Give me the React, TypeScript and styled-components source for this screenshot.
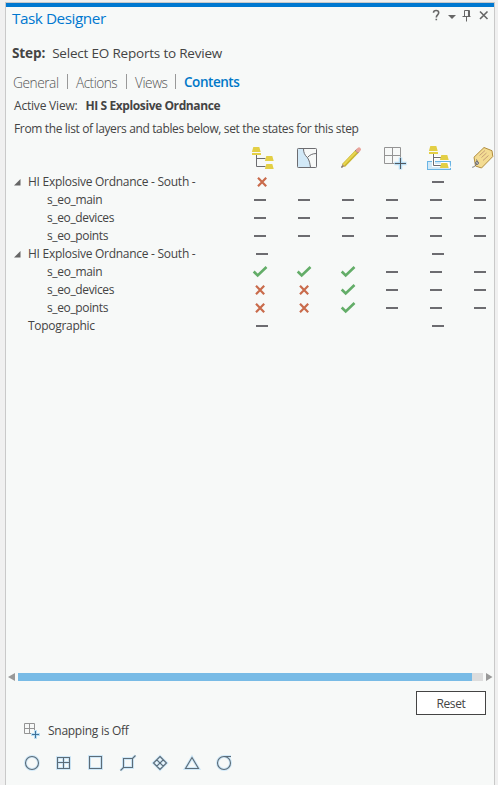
import React from "react";
import styled, { createGlobalStyle } from "styled-components";

const Global = createGlobalStyle`
  * { box-sizing: border-box; }
  html, body { margin: 0; background: #f0f0f0; }
  body { font-family: "Open Sans", "Noto Sans", sans-serif; color: #444; font-size: 12px; overflow: hidden; }
`;

const Panel = styled.div`
  width: 490px;
  height: 783px;
  margin: 2px 0 0 5px;
  border: 1px solid #c9c9c9;
  border-bottom: 0;
  background: #f7f9f8;
  display: flex;
  flex-direction: column;
  overflow: hidden;
`;
const Accent = styled.div`
  height: 4px;
  flex: none;
  background: #0078d0;
`;
const TitleBar = styled.header`
  display: flex;
  justify-content: space-between;
  height: 35px;
  flex: none;
  padding-left: 6px;
`;
const Label = styled.span<{ $size?: number; $track?: number; $weight?: number }>`
  font-size: ${(p) => p.$size ?? 12}px;
  letter-spacing: ${(p) => p.$track ?? 0}px;
  font-weight: ${(p) => p.$weight ?? 400};
  white-space: pre;
`;
const Title = styled(Label)`
  color: #0078d0;
  line-height: 22px;
`;
const StepLine = styled.div`
  display: flex;
  gap: 7px;
  height: 24px;
  flex: none;
  padding-left: 6px;
  line-height: 22px;
`;
const Tabs = styled.nav`
  display: flex;
  height: 31px;
  flex: none;
  padding: 5px 0 0 7px;
`;
const Tab = styled.div<{ $width: number; $active?: boolean }>`
  width: ${(p) => p.$width}px;
  line-height: 23px;
  color: ${(p) => (p.$active ? "#0078c8" : "#555")};
`;
const Divider = styled.i`
  width: 1px;
  height: 15px;
  margin: 3px 8px 0 0;
  background: #999;
`;
const Line = styled.div<{ $height: number }>`
  display: flex;
  gap: 8px;
  flex: none;
  height: ${(p) => p.$height}px;
  line-height: 18px;
  padding-left: 8px;
`;
const Tree = styled.main`
  flex: 1;
  overflow: hidden;
`;
const Row = styled.div<{ $head?: boolean }>`
  display: grid;
  grid-template-columns: 232px repeat(6, 44px);
  height: ${(p) => (p.$head ? 30 : 18)}px;
`;
const Name = styled.div<{ $level: number }>`
  display: flex;
  line-height: 18px;
  padding-left: ${(p) => (p.$level ? 41 : 8)}px;
`;
const Twisty = styled.span`
  width: 14px;
  svg { display: block; margin-top: 6px; }
`;
const Cell = styled.div<{ $group: boolean }>`
  display: flex;
  justify-content: center;
  padding-left: ${(p) => (p.$group ? 4 : 0)}px;
  svg { display: block; flex: none; }
`;
const ScrollBar = styled.div`
  display: flex;
  align-items: center;
  flex: none;
  height: 10px;
  padding-left: 2px;
  gap: 3px;
  svg { display: block; flex: none; }
`;
const Track = styled.div`
  width: 465px;
  height: 8px;
  background: #ddd;
`;
const Thumb = styled.div`
  width: 454px;
  height: 8px;
  background: #78bbe6;
`;
const Footer = styled.footer`
  flex: none;
  height: 103px;
  padding-top: 9px;
`;
const Reset = styled.button`
  display: block;
  width: 70px;
  height: 24px;
  margin-left: 410px;
  padding: 0;
  border: 1px solid #444;
  background: #fff;
  color: #444;
  font-family: inherit;
  line-height: 20px;
`;
const Snapping = styled.div`
  display: flex;
  gap: 6px;
  height: 32px;
  margin-top: 7px;
  padding-left: 18px;
  line-height: 18px;
  svg { display: block; }
`;
const SnapTools = styled.div`
  display: flex;
  gap: 14px;
  padding-left: 17px;
  svg { display: block; }
`;

const grey = "#6c6c70";
const yellow = "#e3cf45";

const Lamp = ({ x, y, bar }: { x: number; y: number; bar?: boolean }) => (
  <g fill={yellow}>
    <path d={`M${x + 1.3} ${y}h6l1.4 5h-8.8z`} />
    {bar && <path d={`M${x} ${y + 6}h9v2h-9z`} />}
  </g>
);

const headIcons = [
  <>
    <path d="M18.5 12v11.5h9M18.5 15.5h9" stroke={grey} fill="none" />
    <Lamp x={14} y={4} bar />
    <Lamp x={27} y={13} />
    <Lamp x={27} y={21} />
  </>,
  <>
    <rect x="15.5" y="5.5" width="19" height="19" rx=".5" fill="#f7f9f8" />
    <path d="M15.5 5.5h6c0 4 1 6.500 4 9.200 2 3 2.500 6 3 9.800h-13z" fill="#d2e9f7" />
    <path d="M21.500 5.500c0 4 1 6.500 4 9.200 2 3 2.500 6 3 9.800M25.500 14.500c2-2.500 5-4 9-4" fill="none" stroke={grey} />
    <rect x="15.500" y="5.500" width="19" height="19" rx=".8" fill="none" stroke={grey} />
  </>,
  <>
    <path d="M17.500 22.500 31 8.500" stroke="#c9b42e" strokeWidth="4" />
    <path d="M17.300 22 30.500 8.200" stroke="#e8d552" strokeWidth="2" />
    <path d="M15.300 24.500l1-3.400 2.500 2.400z" fill="#a98f72" />
    <path d="M15.200 24.700l.6-1.700 1.100 1.200z" fill="#444" />
    <path d="M30.500 9 32 7.400" stroke="#6c6c70" strokeWidth="4" />
    <path d="M31.900 7.500 33 6.400" stroke="#e9a49b" strokeWidth="4" strokeLinecap="round" />
  </>,
  <>
    <path d="M14.500 4.500h16v16h-16zM22.500 4.500v16M14.500 12.500h16" fill="none" stroke="#949494" />
    <path d="M30.500 14.500v12M24.500 20.500h12" stroke="#b9dff6" strokeWidth="3.500" />
    <path d="M30.500 15v11M25 20.500h11" stroke="#505860" />
  </>,
  <>
    <rect x="13.500" y="18.500" width="23" height="8" fill="#d2e9f7" stroke="#6ab5e4" />
    <path d="M19.500 11v11.500h8M19.500 14.500h8" stroke="#fff" strokeWidth="3" fill="none" />
    <path d="M27 19h8l2 6H26z" fill="#fff" />
    <path d="M19.500 11v11.500h8M19.500 14.500h8" stroke={grey} fill="none" />
    <Lamp x={15} y={3} bar />
    <Lamp x={26} y={12} />
    <Lamp x={26} y={20} />
  </>,
  <>
    <path d="M16 14.200 26 4.500l8 3.200.8 5.800L23.500 25l-6-2z" fill="#f3dc92" stroke="#b18d3e" strokeLinejoin="round" />
    <path d="M21.500 12.500l5.500-5M23.500 14.500l5-4.500M25 17.500l5.500-5" stroke="#c6a078" />
    <circle cx="19" cy="20" r="1.500" fill="#fff" stroke={grey} />
    <path d="M18.500 16.500c1.500 2 .5 4.500-1 6s-2.500 1.500-3.300 1.800" fill="none" stroke={grey} />
  </>,
];

const Mark = ({ kind }: { kind: string }) => (
  <svg width="16" height="18">
    {kind === "-" && <path d="M2 8h12v2H2z" fill={grey} />}
    {kind === "x" && <path d="M4 4.800l8.200 8.400M12.200 4.800 4 13.200" stroke="#c96b4b" strokeWidth="2.200" fill="none" />}
    {kind === "v" && <path d="M1.700 8.500 5.700 12.500 14.500 4" stroke="#63ad68" strokeWidth="2.600" fill="none" />}
  </svg>
);

const rows: [string, number, string][] = [
  ["HI Explosive Ordnance - South -", 0, "x   - "],
  ["s_eo_main", 1, "------"],
  ["s_eo_devices", 1, "------"],
  ["s_eo_points", 1, "------"],
  ["HI Explosive Ordnance - South -", 0, "-   - "],
  ["s_eo_main", 1, "vvv---"],
  ["s_eo_devices", 1, "xxv---"],
  ["s_eo_points", 1, "xxv---"],
  ["Topographic", 0, "-   - "],
];
const tracking: Record<string, number> = {
  "HI Explosive Ordnance - South -": -0.27,
  s_eo_main: -0.35,
  s_eo_devices: -0.37,
  s_eo_points: -0.37,
  Topographic: -0.3,
};

const tools = [
  <circle cx="9" cy="9" r="6.500" />,
  <path d="M2.500 3.500h12v11h-12zM8.500 3.500v11M2.500 8.500h12" />,
  <path d="M2.500 2.500h12v12h-12z" />,
  <path d="M4.500 4.500h9v9h-9zM1.500 16.500l3-3M13.500 4.500l3-3" />,
  <path d="M9 2.500 15.500 9 9 15.500 2.500 9zM5.800 5.800l6.400 6.400M12.200 5.800l-6.400 6.400" />,
  <path d="M9 3.500l6.500 11h-13z" />,
  <path d="M9 2.500h7M15.500 9a6.500 6.500 0 1 1-6.500-6.500A6.500 6.500 0 0 1 15.500 9z" />,
];

export default function App() {
  return (
    <>
      <Global />
      <Panel>
        <Accent />
        <TitleBar>
          <Title $size={15.3} $track={-0.45}>Task Designer</Title>
          <svg width="65" height="22" fill="none" stroke="#666">
            <path d="M4.500 5.800c0-3 5.200-3 5.200 0 0 2-2.400 2.100-2.400 4.700M7.300 11.700v1.600" strokeWidth="1.600" />
            <path d="M19 8h8l-4 4z" fill="#666" stroke="none" />
            <path d="M35.500 9.500v-6h5v6M33.500 9.500h8M37.500 9.500v5" />
            <path d="M39.700 4v5" strokeWidth="1.500" />
            <path d="M51 4.500l7.500 7.500M58.500 4.500 51 12" strokeWidth="1.600" />
          </svg>
        </TitleBar>
        <StepLine>
          <Label $size={13.6} $weight={700} $track={-0.15}>Step:</Label>
          <Label $size={13.5} $track={-0.2}>Select EO Reports to Review</Label>
        </StepLine>
        <Tabs>
          <Tab $width={54}><Label $size={13.7} $track={-0.45} $weight={300}>General</Label></Tab>
          <Divider />
          <Tab $width={50}><Label $size={13.7} $track={-0.55} $weight={300}>Actions</Label></Tab>
          <Divider />
          <Tab $width={40}><Label $size={13.7} $track={-0.45} $weight={300}>Views</Label></Tab>
          <Divider />
          <Tab $width={70} $active><Label $size={13.5} $track={-0.45} $weight={600}>Contents</Label></Tab>
        </Tabs>
        <Line $height={23}>
          <Label $track={-0.2}>Active View:</Label>
          <Label $weight={700} $track={-0.4}>HI S Explosive Ordnance</Label>
        </Line>
        <Line $height={23}>
          <Label $track={-0.36}>From the list of layers and tables below, set the states for this step</Label>
        </Line>
        <Tree>
          <Row $head>
            <span />
            {headIcons.map((icon, i) => (
              <Cell $group={false} key={i}><svg width="44" height="30">{icon}</svg></Cell>
            ))}
          </Row>
          {rows.map(([name, level, marks], i) => (
            <Row key={i}>
              <Name $level={level}>
                {level === 0 && (
                  <Twisty>
                    {name !== "Topographic" && <svg width="7" height="7"><path d="M6.500 0v6.500H0z" fill="#666" /></svg>}
                  </Twisty>
                )}
                <Label $track={tracking[name]}>{name}</Label>
              </Name>
              {marks.split("").map((kind, j) => (
                <Cell $group={level === 0} key={j}><Mark kind={kind} /></Cell>
              ))}
            </Row>
          ))}
        </Tree>
        <ScrollBar>
          <svg width="7" height="8"><path d="M7 0v8L0 4z" fill="#999" /></svg>
          <Track><Thumb /></Track>
          <svg width="7" height="8"><path d="M0 0v8l6.500-4z" fill="#999" /></svg>
        </ScrollBar>
        <Footer>
          <Reset><Label $track={-0.35}>Reset</Label></Reset>
          <Snapping>
            <svg width="18" height="18" fill="none">
              <path d="M.5 1.500h10v10H.5zM5.500 1.500v10M.5 6.500h10" stroke="#949494" />
              <path d="M11.500 8v9M7 12.500h9" stroke="#b9dff6" strokeWidth="3" />
              <path d="M11.500 9v7M8 12.500h7" stroke="#3f739a" />
            </svg>
            <Label $track={-0.27}>Snapping is Off</Label>
          </Snapping>
          <SnapTools>
            {tools.map((shape, i) => (
              <svg key={i} width="18" height="18" fill="none">
                <g stroke="#cfe8f8" strokeWidth="3">{shape}</g>
                <g stroke="#5c6c78" strokeWidth="1.100">{shape}</g>
              </svg>
            ))}
          </SnapTools>
        </Footer>
      </Panel>
    </>
  );
}
